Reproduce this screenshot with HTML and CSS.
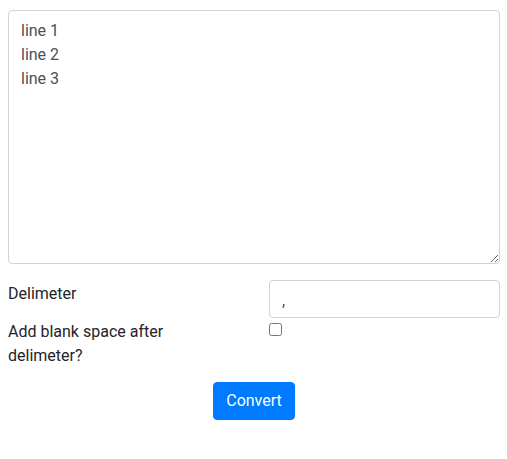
FILE: index.html
```html
<!DOCTYPE html>
<html lang="en">
<head>
    <meta charset="UTF-8">
    <title>Line Joiner</title>
    <link rel="stylesheet" href="styles.css">
</head>
<body>
    <div class="container">
        <textarea class="form-control lines" rows="10">line 1
line 2
line 3</textarea>

        <div class="form-row">
            <label class="form-label" for="delimeter">Delimeter</label>
            <input class="form-control" type="text" id="delimeter" value=",">
        </div>

        <div class="form-row">
            <label class="form-label" for="blank">Add blank space after delimeter?</label>
            <div>
                <input class="check" type="checkbox" id="blank">
            </div>
        </div>

        <div class="actions">
            <button class="btn-primary" type="button">Convert</button>
        </div>
    </div>
</body>
</html>
```

FILE: styles.css
```css
* {
    box-sizing: border-box;
}

body {
    margin: 0;
    font-family: Roboto, "Liberation Sans", sans-serif;
    font-size: 16px;
    line-height: 1.5;
    color: #212529;
    background: #fff;
}

.container {
    padding: 10px 7px 0 8px;
}

.form-control {
    display: block;
    width: 100%;
    padding: 6px 12px;
    font-family: inherit;
    font-size: 16px;
    line-height: 1.5;
    color: #495057;
    background: #fff;
    border: 1px solid #ced4da;
    border-radius: 4px;
    margin: 0;
}

input.form-control {
    height: 38px;
    padding-top: 7px;
    padding-bottom: 5px;
}

.lines {
    height: 254px;
    padding-top: 8px;
    margin-bottom: 16px;
}

.form-row {
    display: grid;
    grid-template-columns: 1fr 1fr;
    column-gap: 30px;
}

.form-label {
    display: block;
    padding-top: 2px;
}

.check {
    display: block;
    width: 13px;
    height: 13px;
    margin: 5px 0 0 0;
}

.actions {
    display: flex;
    justify-content: center;
    margin-top: 14px;
}

.btn-primary {
    font-family: inherit;
    font-size: 16px;
    line-height: 1.5;
    padding: 6px 12px;
    color: #fff;
    background: #007bff;
    border: 1px solid #007bff;
    border-radius: 4px;
}
```
